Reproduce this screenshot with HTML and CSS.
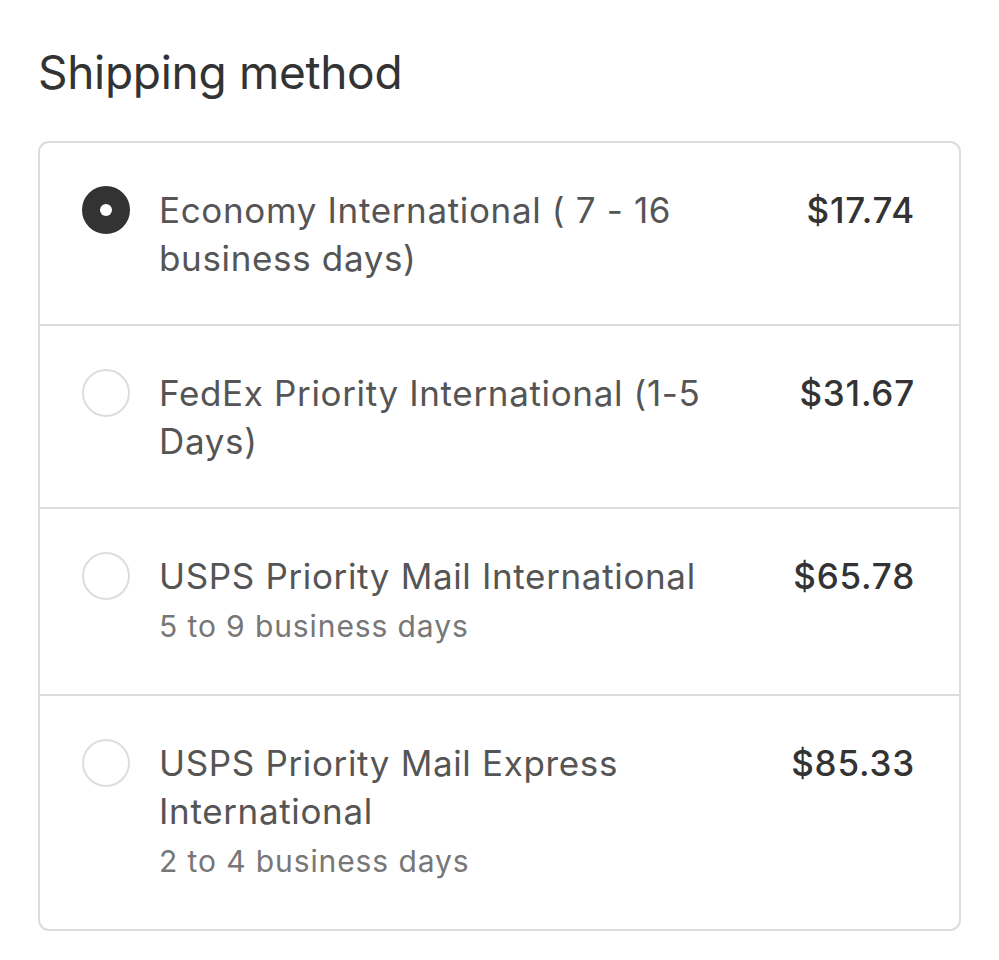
FILE: index.html
```html
<!DOCTYPE html>
<html lang="en">
<head>
<meta charset="utf-8">
<title>Shipping method</title>
<link rel="stylesheet" href="styles.css">
</head>
<body>
<main class="page">
  <h2 class="title">Shipping method</h2>
  <div class="card">
    <label class="row">
      <span class="radio radio-on"></span>
      <span class="info">
        <span class="name">Economy International ( 7 - 16 business days)</span>
      </span>
      <span class="price">$17.74</span>
    </label>
    <label class="row">
      <span class="radio"></span>
      <span class="info">
        <span class="name">FedEx Priority International (1-5 Days)</span>
      </span>
      <span class="price">$31.67</span>
    </label>
    <label class="row">
      <span class="radio"></span>
      <span class="info">
        <span class="name">USPS Priority Mail International</span>
        <span class="sub">5 to 9 business days</span>
      </span>
      <span class="price">$65.78</span>
    </label>
    <label class="row">
      <span class="radio"></span>
      <span class="info">
        <span class="name">USPS Priority Mail Express International</span>
        <span class="sub">2 to 4 business days</span>
      </span>
      <span class="price">$85.33</span>
    </label>
  </div>
</main>
</body>
</html>
```
FILE: styles.css
```css
* { box-sizing: border-box; }
html, body { margin: 0; padding: 0; background: #fff; }
body {
  font-family: Inter, "Liberation Sans", Arial, sans-serif;
  color: #333;
}
.page {
  padding: 44px 38px 0 38px;
}
.title {
  margin: 0 0 41px 0;
  font-size: 46px;
  font-weight: 400;
  line-height: 56px;
  color: #333;
  letter-spacing: -0.3px;
}
.card {
  border: 2px solid #dcdcdc;
  border-radius: 11px;
  display: flex;
  flex-direction: column;
}
.row {
  display: flex;
  align-items: flex-start;
  padding: 43px 44px 42px 42px;
  border-top: 2px solid #dcdcdc;
}
.row:first-child { border-top: none; }
.radio {
  flex: 0 0 48px;
  width: 48px;
  height: 48px;
  border-radius: 50%;
  border: 2px solid #dddddd;
  margin-right: 29px;
  position: relative;
}
.radio-on {
  background: #333;
  border-color: #333;
}
.radio-on::after {
  content: "";
  position: absolute;
  width: 12px;
  height: 12px;
  border-radius: 50%;
  background: #fff;
  left: 50%;
  top: 50%;
  transform: translate(-50%, -50%);
}
.info {
  flex: 1 1 auto;
  min-width: 0;
  display: flex;
  flex-direction: column;
}
.name {
  font-size: 35px;
  line-height: 48px;
  color: #555;
  letter-spacing: 0.65px;
}
.sub {
  font-size: 30px;
  line-height: 52px;
  color: #777;
  letter-spacing: 0.9px;
}
.price {
  flex: 0 0 130px;
  text-align: right;
  font-size: 35px;
  line-height: 48px;
  font-weight: 500;
  color: #333;
  letter-spacing: 0.8px;
}
```
